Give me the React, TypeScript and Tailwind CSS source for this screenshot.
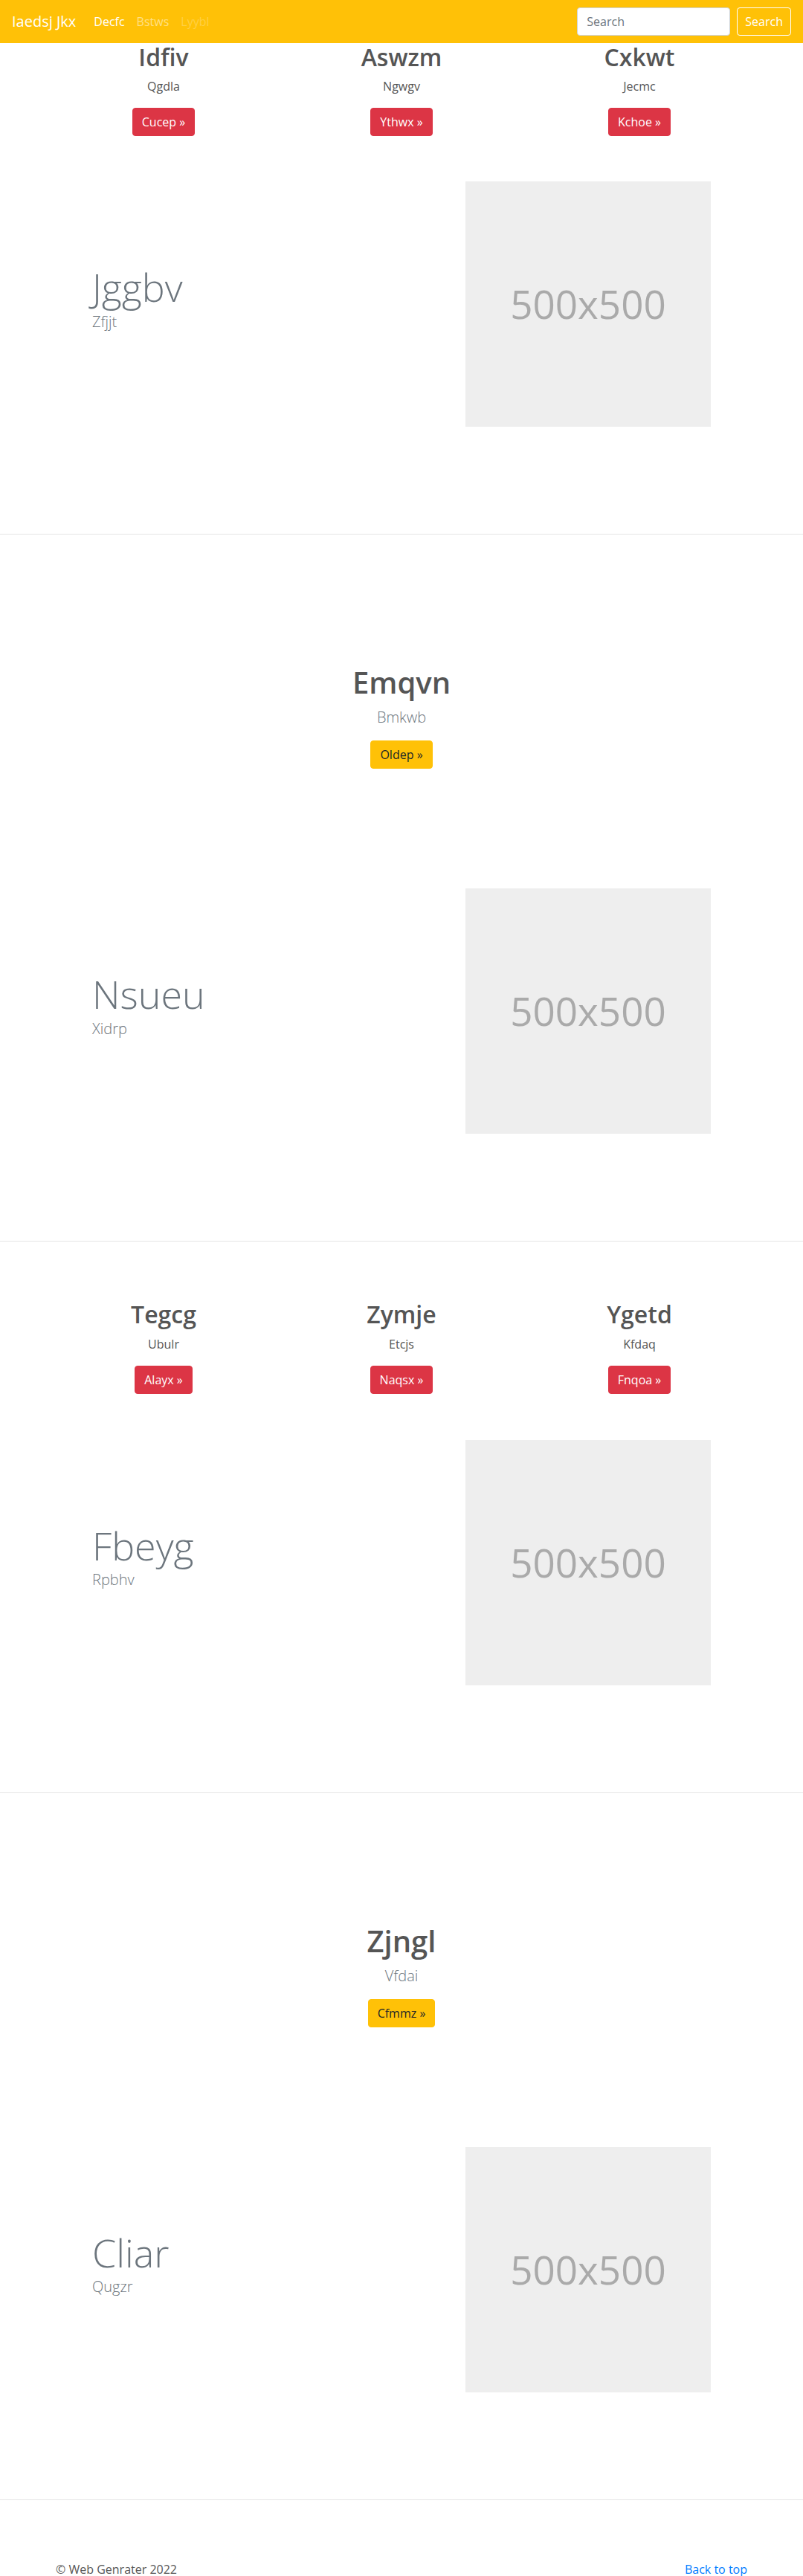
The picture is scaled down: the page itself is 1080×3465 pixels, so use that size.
import React from "react";

type Col = { title: string; sub: string; btn: string };

const rowOne: Col[] = [
  { title: "Idfiv", sub: "Qgdla", btn: "Cucep" },
  { title: "Aswzm", sub: "Ngwgv", btn: "Ythwx" },
  { title: "Cxkwt", sub: "Jecmc", btn: "Kchoe" },
];

const rowTwo: Col[] = [
  { title: "Tegcg", sub: "Ubulr", btn: "Alayx" },
  { title: "Zymje", sub: "Etcjs", btn: "Naqsx" },
  { title: "Ygetd", sub: "Kfdaq", btn: "Fnqoa" },
];

function Navbar() {
  return (
    <nav className="flex h-[58px] items-center bg-[#ffc107] px-4">
      <a href="#" className="mr-4 text-[20px] leading-[30px] text-white">
        Iaedsj Jkx
      </a>
      <ul className="flex">
        <li>
          <a href="#" className="px-2 text-white">Decfc</a>
        </li>
        <li>
          <a href="#" className="px-2 text-white/50">Bstws</a>
        </li>
        <li>
          <a href="#" className="px-2 text-white/25">Lyybl</a>
        </li>
      </ul>
      <form className="ml-auto flex items-center" onSubmit={(e) => e.preventDefault()}>
        <input
          type="text"
          placeholder="Search"
          className="h-[38px] w-[206px] rounded border border-[#ced4da] bg-white px-3 text-base text-[#495057] placeholder-[#6c757d] outline-none"
        />
        <button className="ml-[9px] h-[38px] rounded border border-white px-[10px] text-white">Search</button>
      </form>
    </nav>
  );
}

// three centered columns with red buttons
function ThreeCols({ items }: { items: Col[] }) {
  return (
    <div className="mx-auto grid w-[960px] grid-cols-3 text-center">
      {items.map((it) => (
        <div key={it.title} className="px-[15px]">
          <h2 className="mb-2 text-[32px] font-semibold leading-[1.2] text-[#555]">{it.title}</h2>
          <p className="mb-[17px] text-[#555]">{it.sub}</p>
          <p className="mb-4">
            <a
              href="#"
              className="inline-block rounded border border-[#dc3545] bg-[#dc3545] px-3 py-1.5 leading-6 text-white"
            >
              {it.btn} »
            </a>
          </p>
        </div>
      ))}
    </div>
  );
}

function Hero({ title, sub, btn }: Col) {
  return (
    <div className="text-center">
      <h1 className="mb-2 text-[40px] font-semibold leading-[1.2] text-[#555]">{title}</h1>
      <p className="mb-4 text-[20px] font-light leading-[30px] text-[#6c757d]">{sub}</p>
      <p className="mb-4">
        <a
          href="#"
          className="inline-block rounded border border-[#ffc107] bg-[#ffc107] px-3 py-1.5 leading-6 text-[#212529]"
        >
          {btn} »
        </a>
      </p>
    </div>
  );
}

function Featurette({ title, sub, top }: { title: string; sub: string; top: string }) {
  return (
    <div className={`mx-auto flex w-[960px] items-center justify-between px-16 pb-[144px] ${top}`}>
      <div>
        <h2 className="text-[52px] font-light leading-[1.2] text-[#6c757d]">{title}</h2>
        <p className="mb-4 text-[20px] font-light leading-[30px] text-[#6c757d]">{sub}</p>
      </div>
      <div className="flex h-[330px] w-[330px] items-center justify-center bg-[#eee] text-[53px] text-[#aaa]">
        500x500
      </div>
    </div>
  );
}

export default function App() {
  return (
    <div className="min-h-screen bg-white font-['Open_Sans','Noto_Sans',sans-serif] text-base leading-6 text-[#212529]">
      <Navbar />

      <section>
        <ThreeCols items={rowOne} />
        <Featurette title="Jggbv" sub="Zfjjt" top="pt-[45px]" />
      </section>
      <hr className="border-t border-[#e5e5e5]" />

      <section className="pt-[175px]">
        <Hero title="Emqvn" sub="Bmkwb" btn="Oldep" />
        <Featurette title="Nsueu" sub="Xidrp" top="pt-[145px]" />
      </section>
      <hr className="border-t border-[#e5e5e5]" />

      <section className="pt-[79px]">
        <ThreeCols items={rowTwo} />
        <Featurette title="Fbeyg" sub="Rpbhv" top="pt-[46px]" />
      </section>
      <hr className="border-t border-[#e5e5e5]" />

      <section className="pt-[175px]">
        <Hero title="Zjngl" sub="Vfdai" btn="Cfmmz" />
        <Featurette title="Cliar" sub="Qugzr" top="pt-[145px]" />
      </section>
      <hr className="border-t border-[#e5e5e5]" />

      <footer className="mx-auto flex w-[960px] justify-between px-[15px] pt-[81px] pb-12 text-[#555]">
        <p>© Web Genrater 2022</p>
        <a href="#" className="text-[#007bff]">
          Back to top
        </a>
      </footer>
    </div>
  );
}
